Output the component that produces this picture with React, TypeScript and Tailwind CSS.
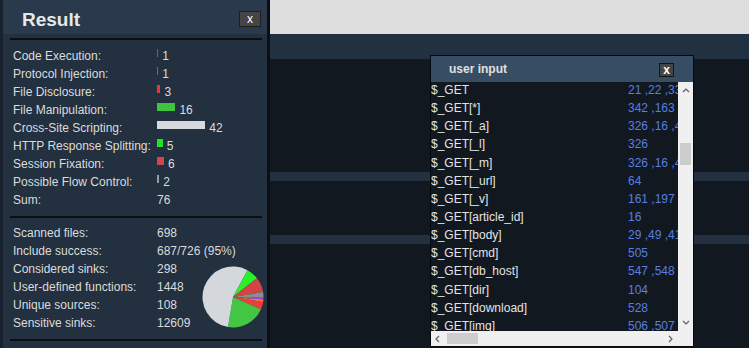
import React from "react";

const vulns = [
  { label: "Code Execution:", value: 1, bar: "#7048d0", pie: "#a040e0" },
  { label: "Protocol Injection:", value: 1, bar: "#a0603c", pie: "#f08030" },
  { label: "File Disclosure:", value: 3, bar: "#e83838", pie: "#f03c3c" },
  { label: "File Manipulation:", value: 16, bar: "#40c440", pie: "#44c644" },
  { label: "Cross-Site Scripting:", value: 42, bar: "#d6d9dd", pie: "#d4d7db" },
  { label: "HTTP Response Splitting:", value: 5, bar: "#22e022", pie: "#2cf02c" },
  { label: "Session Fixation:", value: 6, bar: "#d84444", pie: "#d44444" },
  { label: "Possible Flow Control:", value: 2, bar: "#9a9aa0", pie: "#8c8c94" },
];

const stats = [
  ["Scanned files:", "698"],
  ["Include success:", "687/726 (95%)"],
  ["Considered sinks:", "298"],
  ["User-defined functions:", "1448"],
  ["Unique sources:", "108"],
  ["Sensitive sinks:", "12609"],
];

const inputs = [
  ["$_GET", "21 ,22 ,33 ,34"],
  ["$_GET[*]", "342 ,163 ,164"],
  ["$_GET[_a]", "326 ,16 ,49"],
  ["$_GET[_l]", "326"],
  ["$_GET[_m]", "326 ,16 ,49"],
  ["$_GET[_url]", "64"],
  ["$_GET[_v]", "161 ,197 ,198"],
  ["$_GET[article_id]", "16"],
  ["$_GET[body]", "29 ,49 ,41"],
  ["$_GET[cmd]", "505"],
  ["$_GET[db_host]", "547 ,548 ,549"],
  ["$_GET[dir]", "104"],
  ["$_GET[download]", "528"],
  ["$_GET[img]", "506 ,507 ,508"],
];

function Pie() {
  const total = vulns.reduce((s, v) => s + v.value, 0);
  const cx = 31, cy = 31, r = 30.5;
  let a = 0;
  return (
    <svg width="62" height="62" viewBox="0 0 62 62">
      {vulns.map((v, i) => {
        const a0 = a;
        const a1 = a + (v.value / total) * Math.PI * 2;
        a = a1;
        const x0 = cx + r * Math.cos(a0), y0 = cy + r * Math.sin(a0);
        const x1 = cx + r * Math.cos(a1), y1 = cy + r * Math.sin(a1);
        const large = a1 - a0 > Math.PI ? 1 : 0;
        return (
          <path
            key={i}
            d={`M${cx},${cy} L${x0},${y0} A${r},${r} 0 ${large} 1 ${x1},${y1} Z`}
            fill={v.pie}
          />
        );
      })}
    </svg>
  );
}

function Chevron({ dir }: { dir: "up" | "down" | "left" | "right" }) {
  const pts = {
    up: "1,5 4,2 7,5",
    down: "1,2 4,5 7,2",
    left: "5,1 2,4 5,7",
    right: "2,1 5,4 2,7",
  }[dir];
  return (
    <svg width="8" height="8" viewBox="0 0 8 8">
      <polyline points={pts} fill="none" stroke="#606060" strokeWidth="1.2" />
    </svg>
  );
}

export default function App() {
  return (
    <div className="w-[749px] h-[348px] flex overflow-hidden bg-[#111820] text-[12px] leading-[18px] text-[#dcdcdc] font-['Liberation_Sans',Arial,sans-serif]">
      {/* Result panel */}
      <div className="w-[270px] h-full shrink-0 flex flex-col bg-[#22303f] border-l-[3px] border-l-[#18222e] border-r-[3px] border-r-[#0b0f14]">
        <div className="h-[34px] shrink-0 flex items-center justify-between pt-[4px] pl-[19px] pr-[6px] bg-[#2a3a4c]">
          <span className="text-[19px] font-bold text-[#e8e8e8] leading-none">Result</span>
          <div className="w-[22px] h-[16px] flex items-center justify-center bg-[#454545] border border-[#1e1e1e] text-white text-[12px] leading-none">
            x
          </div>
        </div>
        <div className="h-[2px] mt-[4px] ml-[7px] mr-[5px] bg-[#0b0f14]" />

        <div className="mt-[7px] pl-[10px]">
          {vulns.map((v) => (
            <div key={v.label} className="h-[18px] flex">
              <span className="w-[144px] whitespace-nowrap">{v.label}</span>
              <span
                className="h-[8px] mt-[2px]"
                style={{ width: Math.max(1, v.value * 1.15), background: v.bar }}
              />
              <span className="ml-[4px]">{v.value}</span>
            </div>
          ))}
          <div className="h-[18px] flex">
            <span className="w-[144px]">Sum:</span>
            <span>76</span>
          </div>
        </div>
        <div className="h-[2px] mt-[7px] ml-[7px] mr-[5px] bg-[#0b0f14]" />

        <div className="relative mt-[6px] pl-[10px]">
          {stats.map(([k, v]) => (
            <div key={k} className="h-[18px] flex">
              <span className="w-[144px] whitespace-nowrap">{k}</span>
              <span>{v}</span>
            </div>
          ))}
          <div className="absolute left-[199px] top-[42px]">
            <Pie />
          </div>
        </div>
        <div className="h-[2px] mt-[7px] ml-[7px] mr-[5px] bg-[#0b0f14]" />
      </div>

      {/* Main area */}
      <div className="relative flex-1 flex flex-col">
        <div className="h-[34px] bg-[#dedede]" />
        <div className="h-[25px] bg-[#223141]" />
        <div className="flex-1 bg-[#111820] pt-[113px]">
          <div className="h-[9px] bg-[#22303f]" />
          <div className="h-[9px] mt-[54px] bg-[#22303f]" />
        </div>

        {/* user input window */}
        <div className="absolute left-[160px] top-[55px] w-[264px] h-[292px] flex flex-col border border-[#06090c] bg-[#111820]">
          <div className="h-[26px] shrink-0 relative flex items-center pl-[18px] bg-[#374d63]">
            <span className="font-bold text-[#e0e0e0] leading-none">user input</span>
            <div className="absolute right-[19px] top-[7px] w-[15px] h-[14px] flex items-end justify-center bg-[#454545] border border-[#151515] text-white font-bold text-[12px] leading-[12px]">
              x
            </div>
          </div>
          <div className="h-[249px] flex">
            <div className="flex-1 overflow-hidden">
              <div className="-mt-[1px]">
                {inputs.map(([k, v]) => (
                  <div key={k} className="h-[18.15px] leading-[18.15px] flex whitespace-nowrap">
                    <span className="w-[197px] shrink-0 text-[#e4e4e4]">{k}</span>
                    <span className="text-[#5a7ee0]">{v}</span>
                  </div>
                ))}
              </div>
            </div>
            <div className="w-[15px] shrink-0 relative bg-[#f0f0f0] flex flex-col items-center">
              <div className="mt-[5px]">
                <Chevron dir="up" />
              </div>
              <div className="absolute left-[2px] top-[61px] w-[11px] h-[22px] bg-[#cdcdcd]" />
              <div className="mt-auto mb-[4px]">
                <Chevron dir="down" />
              </div>
            </div>
          </div>
          <div className="h-[15px] shrink-0 flex items-center bg-[#f0f0f0]">
            <div className="w-[247px] h-full flex items-center pl-[3px] pr-[3px]">
              <Chevron dir="left" />
              <div className="ml-[5px] w-[31px] h-[11px] bg-[#cdcdcd]" />
              <div className="ml-auto">
                <Chevron dir="right" />
              </div>
            </div>
          </div>
        </div>
      </div>
    </div>
  );
}
